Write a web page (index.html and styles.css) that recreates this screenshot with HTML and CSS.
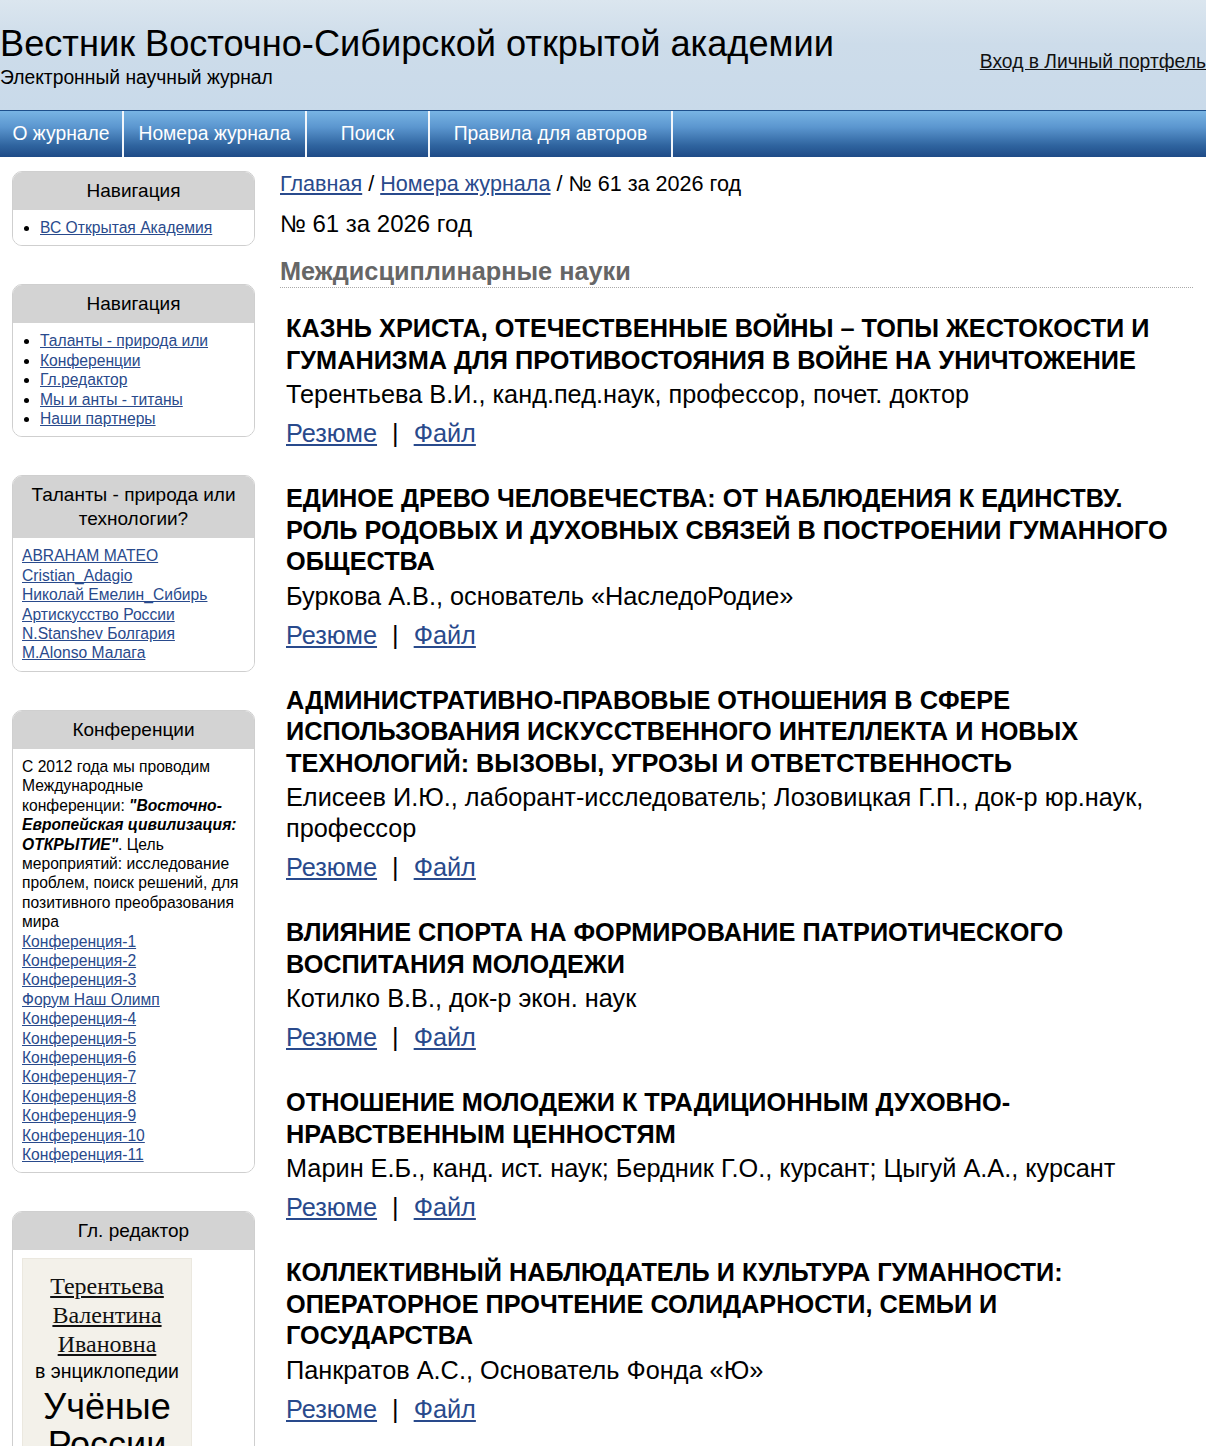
FILE: index.html
```html
<!DOCTYPE html>
<html lang="ru">
<head>
<meta charset="utf-8">
<title>Вестник Восточно-Сибирской открытой академии</title>
<link rel="stylesheet" href="styles.css">
</head>
<body>

<div class="header">
	<div class="logo">
		<div class="siteName">Вестник Восточно-Сибирской открытой академии</div>
		<div class="slogan">Электронный научный журнал</div>
	</div>
	<a class="login" href="#">Вход в Личный портфель</a>
</div>

<div class="menu">
	<a href="#" class="menuItem about">О журнале</a>
	<a href="#" class="menuItem issues">Номера журнала</a>
	<a href="#" class="menuItem search">Поиск</a>
	<a href="#" class="menuItem rules">Правила для авторов</a>
</div>

<div class="page">
	<div class="sidebar">

		<div class="block">
			<div class="blockTitle">Навигация</div>
			<div class="blockBody">
				<ul>
					<li><a href="#">ВС Открытая Академия</a></li>
				</ul>
			</div>
		</div>

		<div class="block">
			<div class="blockTitle">Навигация</div>
			<div class="blockBody">
				<ul>
					<li><a href="#">Таланты - природа или</a></li>
					<li><a href="#">Конференции</a></li>
					<li><a href="#">Гл.редактор</a></li>
					<li><a href="#">Мы и анты - титаны</a></li>
					<li><a href="#">Наши партнеры</a></li>
				</ul>
			</div>
		</div>

		<div class="block">
			<div class="blockTitle">Таланты - природа или технологии?</div>
			<div class="blockBody plain">
				<a href="#">ABRAHAM MATEO</a><br>
				<a href="#">Cristian_Adagio</a><br>
				<a href="#">Николай Емелин_Сибирь</a><br>
				<a href="#">Артискусство России</a><br>
				<a href="#">N.Stanshev Болгария</a><br>
				<a href="#">M.Alonso Малага</a>
			</div>
		</div>

		<div class="block">
			<div class="blockTitle">Конференции</div>
			<div class="blockBody plain">
				С 2012 года мы проводим Международные конференции: <b><i>"Восточно-Европейская цивилизация: ОТКРЫТИЕ"</i></b>. Цель мероприятий: исследование проблем, поиск решений, для позитивного преобразования мира<br>
				<a href="#">Конференция-1</a><br>
				<a href="#">Конференция-2</a><br>
				<a href="#">Конференция-3</a><br>
				<a href="#">Форум Наш Олимп</a><br>
				<a href="#">Конференция-4</a><br>
				<a href="#">Конференция-5</a><br>
				<a href="#">Конференция-6</a><br>
				<a href="#">Конференция-7</a><br>
				<a href="#">Конференция-8</a><br>
				<a href="#">Конференция-9</a><br>
				<a href="#">Конференция-10</a><br>
				<a href="#">Конференция-11</a>
			</div>
		</div>

		<div class="block">
			<div class="blockTitle">Гл. редактор</div>
			<div class="blockBody plain">
				<div class="editor">
					<a href="#" class="editorName">Терентьева Валентина Ивановна</a>
					<div class="editorNote">в энциклопедии</div>
					<div class="editorBook">Учёные России</div>
				</div>
			</div>
		</div>

	</div>

	<div class="content">
		<div class="breadcrumbs"><a href="#">Главная</a> / <a href="#">Номера журнала</a> / № 61 за 2026 год</div>
		<h1 class="issue">№ 61 за 2026 год</h1>
		<h2 class="section">Междисциплинарные науки</h2>

		<div class="article">
			<h3>КАЗНЬ ХРИСТА, ОТЕЧЕСТВЕННЫЕ ВОЙНЫ – ТОПЫ ЖЕСТОКОСТИ И ГУМАНИЗМА ДЛЯ ПРОТИВОСТОЯНИЯ В ВОЙНЕ НА УНИЧТОЖЕНИЕ</h3>
			<p class="authors">Терентьева В.И., канд.пед.наук, профессор, почет. доктор</p>
			<p class="links"><a href="#">Резюме</a> <span>|</span> <a href="#">Файл</a></p>
		</div>

		<div class="article">
			<h3>ЕДИНОЕ ДРЕВО ЧЕЛОВЕЧЕСТВА: ОТ НАБЛЮДЕНИЯ К ЕДИНСТВУ. РОЛЬ РОДОВЫХ И ДУХОВНЫХ СВЯЗЕЙ В ПОСТРОЕНИИ ГУМАННОГО ОБЩЕСТВА</h3>
			<p class="authors">Буркова А.В., основатель «НаследоРодие»</p>
			<p class="links"><a href="#">Резюме</a> <span>|</span> <a href="#">Файл</a></p>
		</div>

		<div class="article">
			<h3>АДМИНИСТРАТИВНО-ПРАВОВЫЕ ОТНОШЕНИЯ В СФЕРЕ ИСПОЛЬЗОВАНИЯ ИСКУССТВЕННОГО ИНТЕЛЛЕКТА И НОВЫХ ТЕХНОЛОГИЙ: ВЫЗОВЫ, УГРОЗЫ И ОТВЕТСТВЕННОСТЬ</h3>
			<p class="authors">Елисеев И.Ю., лаборант-исследователь; Лозовицкая Г.П., док-р юр.наук, профессор</p>
			<p class="links"><a href="#">Резюме</a> <span>|</span> <a href="#">Файл</a></p>
		</div>

		<div class="article">
			<h3>ВЛИЯНИЕ СПОРТА НА ФОРМИРОВАНИЕ ПАТРИОТИЧЕСКОГО ВОСПИТАНИЯ МОЛОДЕЖИ</h3>
			<p class="authors">Котилко В.В., док-р экон. наук</p>
			<p class="links"><a href="#">Резюме</a> <span>|</span> <a href="#">Файл</a></p>
		</div>

		<div class="article">
			<h3>ОТНОШЕНИЕ МОЛОДЕЖИ К ТРАДИЦИОННЫМ ДУХОВНО-НРАВСТВЕННЫМ ЦЕННОСТЯМ</h3>
			<p class="authors">Марин Е.Б., канд. ист. наук; Бердник Г.О., курсант; Цыгуй А.А., курсант</p>
			<p class="links"><a href="#">Резюме</a> <span>|</span> <a href="#">Файл</a></p>
		</div>

		<div class="article">
			<h3>КОЛЛЕКТИВНЫЙ НАБЛЮДАТЕЛЬ И КУЛЬТУРА ГУМАННОСТИ: ОПЕРАТОРНОЕ ПРОЧТЕНИЕ СОЛИДАРНОСТИ, СЕМЬИ И ГОСУДАРСТВА</h3>
			<p class="authors">Панкратов А.С., Основатель Фонда «Ю»</p>
			<p class="links"><a href="#">Резюме</a> <span>|</span> <a href="#">Файл</a></p>
		</div>
	</div>
</div>

</body>
</html>
```

FILE: styles.css
```css
body {
	margin: 0;
	font-family: "Liberation Sans", Arial, sans-serif;
	color: #000;
	background: #fff;
}

a {
	color: #294a8c;
}

/* header */

.header {
	height: 110px;
	display: flex;
	justify-content: space-between;
	align-items: flex-start;
	background: linear-gradient(to bottom, #dbe6ef 0%, #cddcea 40%, #c9daea 100%);
}

.siteName {
	font-size: 36.2px;
	line-height: 40px;
	margin-top: 24px;
	white-space: nowrap;
}

.slogan {
	font-size: 19.3px;
	line-height: 22px;
	margin-top: 3px;
}

.login {
	font-size: 19.3px;
	line-height: 22px;
	margin-top: 51px;
	color: #111;
}

/* top menu */

.menu {
	height: 46px;
	display: flex;
	border-top: 1px solid #1d4f8c;
	background: linear-gradient(to bottom, #78b4e4 0%, #5b96cf 35%, #2f649f 75%, #1f4b87 100%);
}

.menuItem {
	display: block;
	font-size: 19.3px;
	line-height: 46px;
	text-align: center;
	color: #fff;
	text-decoration: none;
	border-right: 2px solid #f2f6fb;
}

.menuItem.about {
	width: 122px;
}

.menuItem.issues {
	width: 181px;
}

.menuItem.search {
	width: 121px;
}

.menuItem.rules {
	width: 241px;
}

/* columns */

.page {
	display: flex;
	gap: 25px;
	padding: 14px 13px 0 12px;
}

.sidebar {
	width: 243px;
	flex-shrink: 0;
}

.content {
	flex: 1;
	min-width: 0;
}

/* sidebar blocks */

.block {
	border: 1px solid #cfcfcf;
	border-radius: 10px;
	overflow: hidden;
	margin-bottom: 38px;
}

.blockTitle {
	background: #d3d3d3;
	font-size: 19px;
	line-height: 24px;
	padding: 7px 10px;
	text-align: center;
}

.blockBody {
	font-size: 15.65px;
	line-height: 19.4px;
	padding: 8px 12px 8px 9px;
	background: #fff;
}

.blockBody ul {
	margin: 0;
	padding-left: 18px;
}

.editor {
	width: 168px;
	background: #f3f1ea;
	border: 1px solid #ebe8df;
	text-align: center;
	padding-top: 13px;
	height: 240px;
}

.editorName {
	display: block;
	font-family: "Liberation Serif", "Times New Roman", serif;
	font-size: 24px;
	line-height: 29px;
	color: #111;
	padding: 0 20px;
}

.editorNote {
	font-size: 19.5px;
	line-height: 24px;
}

.editorBook {
	font-size: 36px;
	line-height: 38px;
	padding-top: 5px;
}

/* main column */

.breadcrumbs {
	font-size: 21.6px;
	line-height: 26px;
}

.issue {
	font-size: 24px;
	font-weight: normal;
	line-height: 28px;
	margin: 13px 0 0 0;
}

.section {
	font-size: 25.3px;
	font-weight: bold;
	color: #666;
	line-height: 28px;
	margin: 19px 0 0 0;
	padding-bottom: 2px;
	border-bottom: 1px dotted #aaa;
}

.article {
	padding: 0 6px;
	margin-top: 25px;
}

.article + .article {
	margin-top: 34px;
}

.article h3 {
	font-size: 25.3px;
	line-height: 31.5px;
	margin: 0;
}

.authors {
	font-size: 25.3px;
	line-height: 31px;
	margin: 3px 0 0 0;
}

.links {
	font-size: 25.3px;
	line-height: 31px;
	margin: 8px 0 0 0;
}

.links span {
	padding: 0 8px;
}
```
